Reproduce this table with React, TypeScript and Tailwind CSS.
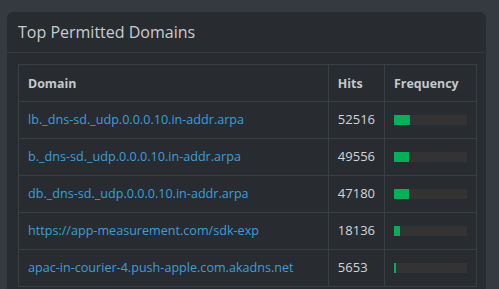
const rows = [
  { domain: "lb._dns-sd._udp.0.0.0.10.in-addr.arpa", hits: 52516 },
  { domain: "b._dns-sd._udp.0.0.0.10.in-addr.arpa", hits: 49556 },
  { domain: "db._dns-sd._udp.0.0.0.10.in-addr.arpa", hits: 47180 },
  { domain: "https://app-measurement.com/sdk-exp", hits: 18136 },
  { domain: "apac-in-courier-4.push-apple.com.akadns.net", hits: 5653 },
];

const total = 237000;

export default function App() {
  return (
    <div className="h-[289px] w-[499px] overflow-hidden bg-[#343a40] pt-3 pl-[7px] pr-[13px] font-['Open_Sans',sans-serif]">
      <div className="h-[300px] rounded-t-md bg-[#282c30]">
        <div className="flex h-[41px] items-center border-b border-[#353a3f] px-[11px]">
          <h2 className="text-[16px] font-medium text-[#c8ccd0]">Top Permitted Domains</h2>
        </div>
        <div className="px-[11px] pt-[11px]">
          <table className="w-[459px] border-collapse text-[12.6px] font-medium">
            <thead>
              <tr className="h-[37px]">
                <th className="border border-[#3a3f44] px-[9px] pt-[2px] text-left text-[12.4px] font-bold text-[#c4c8cc]">Domain</th>
                <th className="w-[56px] border border-[#3a3f44] px-[9px] pt-[2px] text-left text-[12.4px] font-bold text-[#c4c8cc]">Hits</th>
                <th className="w-[92px] border border-[#3a3f44] px-[9px] pt-[2px] text-left text-[12.4px] font-bold text-[#c4c8cc]">Frequency</th>
              </tr>
            </thead>
            <tbody>
              {rows.map((r) => (
                <tr key={r.domain} className="h-[37px]">
                  <td className="border border-[#3a3f44] px-[9px] text-[#3a9fdc]">{r.domain}</td>
                  <td className="border border-[#3a3f44] px-[9px] text-[13px] text-[#d2d6da]">{r.hits}</td>
                  <td className="border border-[#3a3f44] px-[9px]">
                    <div className="h-[10px] w-[73px] bg-[#333333]">
                      <div className="h-full bg-[#00b159]" style={{ width: `${(r.hits / total) * 100}%` }} />
                    </div>
                  </td>
                </tr>
              ))}
            </tbody>
          </table>
        </div>
      </div>
    </div>
  );
}
